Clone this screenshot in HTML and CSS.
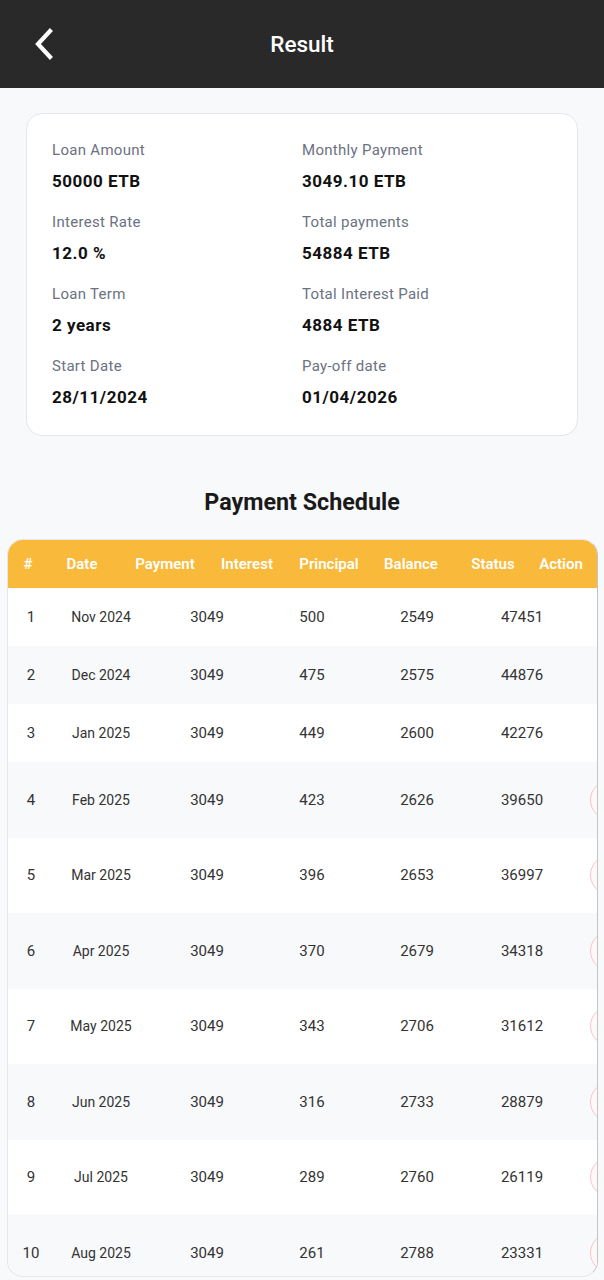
FILE: index.html
```html
<!DOCTYPE html>
<html>
<head>
<meta charset="utf-8">
<link rel="stylesheet" href="styles.css">
</head>
<body>
<header class="topbar">
  <svg class="back" width="22" height="32" viewBox="0 0 22 32"><path d="M17 3 L5 16 L17 29" fill="none" stroke="#fff" stroke-width="4.2" stroke-linecap="square"/></svg>
  <h1 class="title">Result</h1>
</header>
<main class="page">
  <section class="card">
    <div class="item"><div class="label">Loan Amount</div><div class="value">50000 ETB</div></div>
    <div class="item"><div class="label">Monthly Payment</div><div class="value">3049.10 ETB</div></div>
    <div class="item"><div class="label">Interest Rate</div><div class="value">12.0 %</div></div>
    <div class="item"><div class="label">Total payments</div><div class="value">54884 ETB</div></div>
    <div class="item"><div class="label">Loan Term</div><div class="value">2 years</div></div>
    <div class="item"><div class="label">Total Interest Paid</div><div class="value">4884 ETB</div></div>
    <div class="item"><div class="label">Start Date</div><div class="value">28/11/2024</div></div>
    <div class="item"><div class="label">Pay-off date</div><div class="value">01/04/2026</div></div>
  </section>
  <h2 class="section-title">Payment Schedule</h2>
  <section class="table">
    <div class="thead">
      <div>#</div><div>Date</div><div>Payment</div><div>Interest</div><div>Principal</div><div>Balance</div><div>Status</div><div>Action</div>
    </div>
    <div class="row"><div>1</div><div class="date">Nov 2024</div><div>3049</div><div>500</div><div>2549</div><div>47451</div><div class="act"></div></div>
    <div class="row alt"><div>2</div><div class="date">Dec 2024</div><div>3049</div><div>475</div><div>2575</div><div>44876</div><div class="act"></div></div>
    <div class="row"><div>3</div><div class="date">Jan 2025</div><div>3049</div><div>449</div><div>2600</div><div>42276</div><div class="act"></div></div>
    <div class="row alt tall"><div>4</div><div class="date">Feb 2025</div><div>3049</div><div>423</div><div>2626</div><div>39650</div><div class="act"><span class="btn"></span></div></div>
    <div class="row tall"><div>5</div><div class="date">Mar 2025</div><div>3049</div><div>396</div><div>2653</div><div>36997</div><div class="act"><span class="btn"></span></div></div>
    <div class="row alt tall"><div>6</div><div class="date">Apr 2025</div><div>3049</div><div>370</div><div>2679</div><div>34318</div><div class="act"><span class="btn"></span></div></div>
    <div class="row tall"><div>7</div><div class="date">May 2025</div><div>3049</div><div>343</div><div>2706</div><div>31612</div><div class="act"><span class="btn"></span></div></div>
    <div class="row alt tall"><div>8</div><div class="date">Jun 2025</div><div>3049</div><div>316</div><div>2733</div><div>28879</div><div class="act"><span class="btn"></span></div></div>
    <div class="row tall"><div>9</div><div class="date">Jul 2025</div><div>3049</div><div>289</div><div>2760</div><div>26119</div><div class="act"><span class="btn"></span></div></div>
    <div class="row alt tall"><div>10</div><div class="date">Aug 2025</div><div>3049</div><div>261</div><div>2788</div><div>23331</div><div class="act"><span class="btn"></span></div></div>
  </section>
</main>
</body>
</html>
```

FILE: styles.css
```css
* { box-sizing: border-box; }
html, body { margin: 0; padding: 0; }
body {
  background: #f8f9fb;
  font-family: Roboto, "Liberation Sans", sans-serif;
  color: #1a1a1a;
  height: 1280px;
  overflow: hidden;
}
.topbar {
  height: 88px;
  background: #292929;
  position: relative;
  display: flex;
  align-items: center;
  justify-content: center;
}
.back {
  position: absolute;
  left: 33px;
  top: 28px;
}
.title {
  margin: 0;
  color: #fff;
  font-size: 22.5px;
  font-weight: 500;
}
.page {
  padding-top: 25px;
}
.card {
  margin: 0 26px;
  background: #fff;
  border: 1px solid #e3e6ea;
  border-radius: 16px;
  padding: 26px 25px 27px;
  display: grid;
  grid-template-columns: 250px 250px;
  row-gap: 20px;
}
.label {
  font-size: 15px;
  line-height: 20px;
  color: #6b7280;
  letter-spacing: 0.3px;
}
.value {
  margin-top: 10px;
  font-size: 17px;
  line-height: 22px;
  font-weight: 700;
  color: #111;
  letter-spacing: 0.5px;
}
.section-title {
  margin: 52px 0 0;
  text-align: center;
  font-size: 23.3px;
  line-height: 28px;
  font-weight: 700;
  color: #1a1a1a;
}
.table {
  margin: 23px 6px 0 7px;
  height: 738px;
  border: 1px solid #e3e6ea;
  border-right-color: #c4c4c4;
  border-radius: 16px;
  overflow: hidden;
  background: #fff;
}
.thead {
  height: 48px;
  background: #f9b93b;
  display: grid;
  grid-template-columns: 40px 68px 98px 66px 98px 66px 98px 38px;
  align-items: center;
  color: #fff;
  font-size: 15px;
  font-weight: 600;
}
.thead > div {
  display: flex;
  justify-content: center;
  white-space: nowrap;
}
.row {
  height: 58px;
  display: grid;
  grid-template-columns: 46px 94px 118px 92px 118px 92px 1fr;
  align-items: center;
  font-size: 15px;
  color: #333;
  background: #fff;
}
.row.alt { background: #f8f9fb; }
.row.tall { height: 75.5px; }
.row > div {
  text-align: center;
  white-space: nowrap;
}
.row > .date { font-size: 14px; }
.row > .act {
  text-align: left;
  padding-left: 22px;
  height: 40px;
}
.btn {
  display: block;
  width: 60px;
  height: 40px;
  border: 1.5px solid #f3c6ca;
  border-radius: 20px;
  background: #fff8f8;
}
```
